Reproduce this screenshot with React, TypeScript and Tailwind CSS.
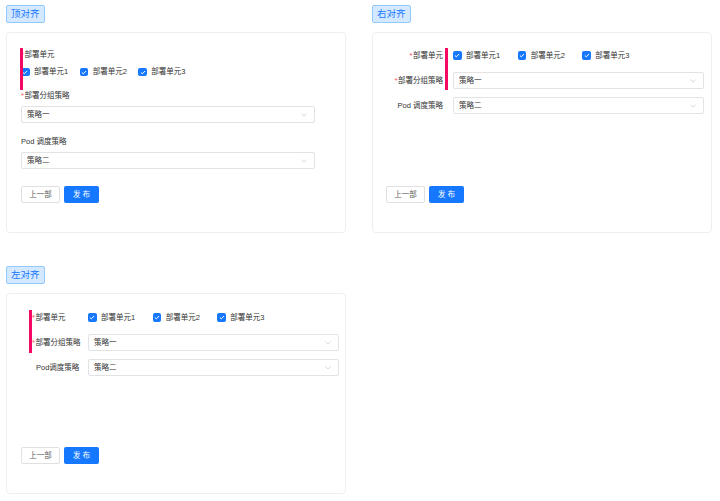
import type { ReactNode } from "react";

const FONT = "font-['Liberation_Sans','Noto_Sans_CJK_SC',sans-serif]";

function Tag({ children }: { children: ReactNode }) {
  return (
    <span className="inline-flex items-center h-[18px] px-[4px] border border-[#91caff] bg-[#d4e8ff] text-[#1677ff] text-[9.5px] leading-none rounded-[2px]">
      {children}
    </span>
  );
}

function Req() {
  return <span className="text-[#ff4d4f] mr-[0.5px]">*</span>;
}

function Checkbox({ label, gap }: { label: string; gap: string }) {
  return (
    <div className={`flex items-center ${gap}`}>
      <span className="w-[8.5px] h-[8.5px] rounded-[2px] bg-[#1677ff] flex items-center justify-center shrink-0">
        <svg width="6" height="5" viewBox="0 0 6 5">
          <polyline
            points="0.9,2.5 2.3,3.8 5.1,1"
            fill="none"
            stroke="white"
            strokeWidth="1"
          />
        </svg>
      </span>
      <span className="ml-[4.5px] whitespace-nowrap">{label}</span>
    </div>
  );
}

function Units({ gap }: { gap: string }) {
  return (
    <div className="flex items-center">
      <Checkbox label="部署单元1" gap={gap} />
      <Checkbox label="部署单元2" gap={gap} />
      <Checkbox label="部署单元3" gap={gap} />
    </div>
  );
}

function Select({ value, className = "" }: { value: string; className?: string }) {
  return (
    <div
      className={`h-[17px] border border-[#e3e3e3] rounded-[2px] bg-white flex items-center justify-between pl-[5px] pr-[7px] ${className}`}
    >
      <span className="text-[#333]">{value}</span>
      <svg width="6" height="4" viewBox="0 0 6 4">
        <polyline
          points="0.5,0.6 3,3.2 5.5,0.6"
          fill="none"
          stroke="#c4c4c4"
          strokeWidth="0.7"
        />
      </svg>
    </div>
  );
}

function Buttons() {
  return (
    <div className="mt-auto flex items-center">
      <button className="h-[17px] w-[39px] border border-[#e0e0e0] rounded-[2px] bg-white text-[#5c5c5c] flex items-center justify-center">
        上一部
      </button>
      <button className="ml-[4px] h-[17px] w-[35px] rounded-[2px] bg-[#1677ff] text-white flex items-center justify-center">
        发 布
      </button>
    </div>
  );
}

function Bar({ className }: { className: string }) {
  return <div className={`absolute w-[2.5px] bg-[#f50a63] ${className}`} />;
}

function Card({ children, className }: { children: ReactNode; className: string }) {
  return (
    <div
      className={`relative mt-[9px] w-[340px] h-[201px] border border-[#efefef] rounded-[4px] bg-white flex flex-col pb-[29px] ${className}`}
    >
      {children}
    </div>
  );
}

function TopCard() {
  return (
    <Card className="pt-[17px] px-[14px]">
      <Bar className="left-[13px] top-[15px] h-[42px]" />
      <div className="flex flex-col">
        <div className="leading-[10px] h-[10px]">
          <Req />
          部署单元
        </div>
        <div className="mt-[6px] h-[12px] flex items-center">
          <Units gap="mr-[11.5px]" />
        </div>
        <div className="mt-[13px] leading-[10px] h-[10px]">
          <Req />
          部署分组策略
        </div>
        <Select value="策略一" className="mt-[5px] w-[294px]" />
        <div className="mt-[14px] leading-[10px] h-[10px]">Pod 调度策略</div>
        <Select value="策略二" className="mt-[5px] w-[294px]" />
      </div>
      <Buttons />
    </Card>
  );
}

function RightCard() {
  const row = "flex items-center h-[17px]";
  const label = "w-[57px] text-right whitespace-nowrap shrink-0";
  return (
    <Card className="pt-[14px] pl-[13px] pr-[7px]">
      <Bar className="left-[72px] top-[15px] h-[42px]" />
      <div className="flex flex-col gap-y-[8px]">
        <div className={row}>
          <div className={label}>
            <Req />
            部署单元
          </div>
          <div className="ml-[10px]">
            <Units gap="mr-[17.5px]" />
          </div>
        </div>
        <div className={row}>
          <div className={label}>
            <Req />
            部署分组策略
          </div>
          <Select value="策略一" className="ml-[10px] w-[251px]" />
        </div>
        <div className={row}>
          <div className={label}>Pod 调度策略</div>
          <Select value="策略二" className="ml-[10px] w-[251px]" />
        </div>
      </div>
      <Buttons />
    </Card>
  );
}

function LeftCard() {
  const row = "flex items-center h-[17px]";
  const label = "w-[56px] whitespace-nowrap shrink-0";
  return (
    <Card className="pt-[15px] pl-[14px] pr-[6px]">
      <Bar className="left-[22px] top-[16px] h-[43px]" />
      <div className="flex flex-col gap-y-[8px] ml-[11px]">
        <div className={row}>
          <div className={label}>
            <Req />
            部署单元
          </div>
          <Units gap="mr-[17.5px]" />
        </div>
        <div className={row}>
          <div className={label}>
            <Req />
            部署分组策略
          </div>
          <Select value="策略一" className="w-[251px]" />
        </div>
        <div className={row}>
          <div className={`${label} pl-[4px]`}>Pod调度策略</div>
          <Select value="策略二" className="w-[251px]" />
        </div>
      </div>
      <Buttons />
    </Card>
  );
}

export default function App() {
  return (
    <div className={`min-h-[501px] bg-white pl-[6px] pt-[5px] text-[7.5px] text-[#333] ${FONT}`}>
      <div className="grid grid-cols-[340px_340px] gap-x-[26px] gap-y-[33px]">
        <div className="flex flex-col items-start">
          <Tag>顶对齐</Tag>
          <TopCard />
        </div>
        <div className="flex flex-col items-start">
          <Tag>右对齐</Tag>
          <RightCard />
        </div>
        <div className="flex flex-col items-start">
          <Tag>左对齐</Tag>
          <LeftCard />
        </div>
      </div>
    </div>
  );
}
